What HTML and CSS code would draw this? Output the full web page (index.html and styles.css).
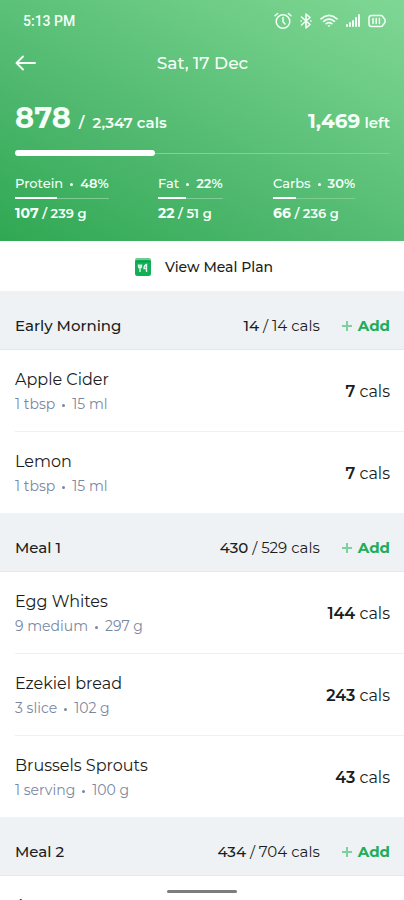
FILE: index.html
```html
<!DOCTYPE html>
<html lang="en">
<head>
<meta charset="utf-8">
<meta name="viewport" content="width=device-width, initial-scale=1">
<title>Food diary</title>
<link rel="stylesheet" href="styles.css">
</head>
<body>
<div class="app">
  <header class="hero">
    <div class="status">
      <span class="clock">5:13 PM</span>
      <div class="status-icons">
        <svg width="18" height="18" viewBox="0 0 18 18" fill="none" stroke="currentColor" stroke-width="1.5" stroke-linecap="round"><circle cx="9" cy="9.500" r="6.800"/><path d="M9 5.500v4.200l2 2.200M1 3.800l2.600-2.300M17 3.800l-2.600-2.300"/></svg>
        <svg width="12" height="18" viewBox="0 0 12 18" fill="none" stroke="currentColor" stroke-width="1.600" stroke-linejoin="round" stroke-linecap="round"><path d="M1.500 5l8.500 7.500L6 16V2l4 3.500L1.500 13M1 9h.3M10.800 9h.3"/></svg>
        <svg width="18" height="14" viewBox="0 0 18 14" fill="none" stroke="currentColor" stroke-width="1.700" stroke-linecap="round"><path d="M1 4.800Q9-2 17 4.800M3.600 7.300Q9 2.800 14.400 7.300M6.200 9.700Q9 7.500 11.800 9.700"/><path d="M7.300 11.200h3.400L9 13z" fill="currentColor" stroke="none"/></svg>
        <svg width="14" height="14" viewBox="0 0 14 14" fill="currentColor"><rect x="0" y="10" width="2" height="3" rx="1"/><rect x="3" y="8" width="2" height="5" rx="1"/><rect x="6" y="6" width="2" height="7" rx="1"/><rect x="9" y="3" width="2" height="10" rx="1"/><rect x="12" y="0" width="2" height="13" rx="1"/></svg>
        <svg width="18" height="14" viewBox="0 0 18 14" fill="none" stroke="currentColor" stroke-width="1.500" stroke-linecap="round" stroke-linejoin="round"><path d="M3.500 1.500h9.500q1.500 0 2 1.500l2 2.500v3l-2 2.500q-.5 1.500-2 1.500H3.500Q1 12.500 1 10V4q0-2.500 2.500-2.500zM5 4.500v5M8.200 4.500v5M11.400 4.500v5"/></svg>
      </div>
    </div>
    <div class="titlebar">
      <button class="back" aria-label="Back"><svg width="22" height="18" viewBox="0 0 22 18" fill="none" stroke="currentColor" stroke-width="1.900" stroke-linecap="round" stroke-linejoin="round"><path d="M20 9H1.500M8 2.500L1.500 9l6.500 6.500"/></svg></button>
      <h1>Sat, 17 Dec</h1>
    </div>
    <div class="totals">
      <div><strong class="eaten">878</strong><span class="goal">/&nbsp; 2,347 cals</span></div>
      <div><strong class="left">1,469</strong> left</div>
    </div>
    <div class="bar"><div class="bar-fill" style="width:37.4%"></div></div>
    <div class="macros">
      <div class="macro"><span class="macro-name">Protein<i></i><b>48%</b></span><div class="mini"><div class="mini-fill" style="width:45%"></div></div><span class="macro-value"><b>107</b> / 239 g</span></div>
      <div class="macro"><span class="macro-name">Fat<i></i><b>22%</b></span><div class="mini"><div class="mini-fill" style="width:43%"></div></div><span class="macro-value"><b>22</b> / 51 g</span></div>
      <div class="macro"><span class="macro-name">Carbs<i></i><b>30%</b></span><div class="mini"><div class="mini-fill" style="width:28%"></div></div><span class="macro-value"><b>66</b> / 236 g</span></div>
    </div>
  </header>

  <button class="plan">
    <svg width="16" height="18" viewBox="0 0 16 18"><rect width="16" height="5" rx="2" fill="#6fcb8f"/><rect y="2" width="16" height="16" rx="2.500" fill="#12ae58"/><path d="M0 3.500h16" stroke="#0b9a4a"/><path d="M3.500 6.500v2q0 1.500 1.500 1.500t1.500-1.500v-2M5 6.500V14M11.500 14V6.500q-2.500 1-2.500 4h2.500" fill="none" stroke="#dff5e7" stroke-width="1.400"/></svg>
    View Meal Plan
  </button>

  <main>
    <section>
      <div class="meal"><h2>Early Morning</h2><span class="sum"><b>14</b> / 14 cals</span><button class="add"><span class="plus"></span>Add</button></div>
      <ul>
        <li><div><h3>Apple Cider</h3><p>1 tbsp<i></i>15 ml</p></div><span class="cals"><b>7</b> cals</span></li>
        <li><div><h3>Lemon</h3><p>1 tbsp<i></i>15 ml</p></div><span class="cals"><b>7</b> cals</span></li>
      </ul>
    </section>
    <section>
      <div class="meal"><h2>Meal 1</h2><span class="sum"><b>430</b> / 529 cals</span><button class="add"><span class="plus"></span>Add</button></div>
      <ul>
        <li><div><h3>Egg Whites</h3><p>9 medium<i></i>297 g</p></div><span class="cals"><b>144</b> cals</span></li>
        <li><div><h3>Ezekiel bread</h3><p>3 slice<i></i>102 g</p></div><span class="cals"><b>243</b> cals</span></li>
        <li><div><h3>Brussels Sprouts</h3><p>1 serving<i></i>100 g</p></div><span class="cals"><b>43</b> cals</span></li>
      </ul>
    </section>
    <section>
      <div class="meal"><h2>Meal 2</h2><span class="sum"><b>434</b> / 704 cals</span><button class="add"><span class="plus"></span>Add</button></div>
      <ul>
        <li><div><h3>A</h3></div></li>
      </ul>
    </section>
  </main>
  <div class="home-handle"></div>
</div>
</body>
</html>
```
FILE: styles.css
```css
* { box-sizing: border-box; margin: 0; padding: 0; }

body {
  font-family: Montserrat, Inter, "Open Sans", sans-serif;
  font-size: 15px;
  line-height: 22px;
  color: #1b1d20;
  background: #fff;
}

button { font: inherit; color: inherit; background: none; border: 0; cursor: pointer; }
ul { list-style: none; }
b { font-weight: 600; }
svg { display: block; }

.app { position: relative; height: 100vh; overflow: hidden; }

.hero {
  padding: 10px 14px 16px 15px;
  color: #f5fff8;
  background: linear-gradient(207deg, #80d795 0%, #6aca83 28%, #51b970 60%, #2fa853 100%);
}

.status { display: flex; justify-content: space-between; align-items: center; padding: 0 4px 0 8px; }
.clock { font-family: Roboto, sans-serif; font-size: 14px; font-weight: 500; }
.status-icons { display: flex; align-items: center; gap: 8px; }

.titlebar { display: grid; grid-template-columns: 22px 1fr 22px; align-items: center; margin-top: 20px; }
h1 { font-size: 17px; font-weight: 500; line-height: 22px; text-align: center; }

.totals { display: flex; justify-content: space-between; align-items: baseline; margin-top: 28px; font-weight: 600; line-height: 32px; }
.eaten { font-size: 29px; font-weight: 700; }
.goal { margin-left: 8px; }
.left { font-size: 20px; font-weight: 700; }

.bar { display: flex; align-items: center; height: 6px; margin-top: 11px; background: linear-gradient(#83d198, #83d198) center / 100% 1px no-repeat; }
.bar-fill { height: 6px; border-radius: 3px; background: #fff; }

.macros { display: grid; grid-template-columns: 143fr 115fr 117fr; margin-top: 17px; font-size: 13px; line-height: 20px; }
.macro { justify-self: start; }
.macro-name { display: block; font-weight: 500; }
.macro-value { display: block; font-weight: 600; line-height: 24px; }
.macro-value b { font-size: 14px; font-weight: 700; }
.mini { height: 2px; margin-top: 4px; margin-bottom: 2px; background: linear-gradient(#7bcd91, #7bcd91) center / 100% 1px no-repeat; }
.mini-fill { height: 2px; background: #fff; }

i { display: inline-block; width: 3px; height: 3px; margin: 0 7px; border-radius: 50%; background: currentColor; vertical-align: middle; }

.plan { display: flex; align-items: center; justify-content: center; gap: 14px; width: 100%; height: 50px; padding-top: 2px; padding-left: 4px; font-size: 14px; font-weight: 500; }

.meal { display: flex; align-items: center; padding: 24px 14px 12px 15px; background: #eef2f5; border-bottom: 1px solid #e3e8eb; }
h2 { flex: 1; font-size: 15px; font-weight: 500; }
.sum b { font-weight: 500; }
.cals { font-size: 16px; }
.add { display: flex; align-items: center; gap: 6px; margin-left: 22px; font-weight: 700; color: #20ad59; }
.plus { width: 10px; height: 10px; background: linear-gradient(#7fcfa0, #7fcfa0) center / 10px 2px no-repeat, linear-gradient(#7fcfa0, #7fcfa0) center / 2px 10px no-repeat; }

li { display: flex; align-items: center; justify-content: space-between; margin-left: 15px; padding: 19px 14px 16px 0; border-bottom: 1px solid #eef0f1; }
li:last-child { border-bottom: 0; }
h3 { font-size: 16px; font-weight: 400; }
p { margin-top: 2px; font-size: 14px; color: #7b87a0; }

.home-handle { position: absolute; bottom: 7px; left: 50%; width: 70px; height: 3px; margin-left: -35px; border-radius: 2px; background: #7d7d7d; }
```
